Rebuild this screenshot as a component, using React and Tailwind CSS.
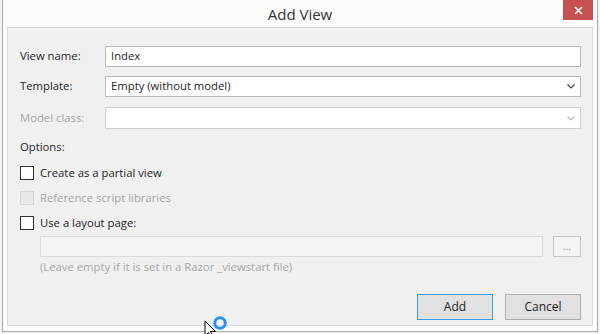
import React from "react";

const Chevron = ({ color }) => (
  <svg width="8" height="5" viewBox="0 0 8 5" className="shrink-0">
    <path d="M0.5 0.5 L4 4 L7.5 0.5" fill="none" stroke={color} strokeWidth="1.2" />
  </svg>
);

const Check = ({ disabled }) => (
  <div
    className={
      "w-[14px] h-[14px] border shrink-0 " +
      (disabled ? "border-[#d4d4d4] bg-[#e8e8e8]" : "border-[#333333] bg-white")
    }
  />
);

export default function App() {
  return (
    <div
      className="w-[600px] h-[334px] bg-[#f4f4f4] overflow-hidden relative text-[11.3px] text-[#1e1e1e]"
      style={{ fontFamily: "'Open Sans', 'Noto Sans', sans-serif" }}
    >
      <div className="ml-[2px] w-[596px] h-[332px] bg-[#fcfcfc] border-l border-r border-b border-[#a9a9a9] flex flex-col relative">
        <div className="h-[27px] flex items-center justify-center relative">
          <span className="text-[15px] text-[#333333] mt-[1px]">Add View</span>
          <div className="absolute right-[4px] top-0 w-[30px] h-[20px] bg-[#c75050] flex items-center justify-center">
            <svg width="9" height="9" viewBox="0 0 9 9">
              <path d="M1 1 L8 8 M8 1 L1 8" stroke="white" strokeWidth="1.6" />
            </svg>
          </div>
        </div>
        <div className="ml-[4px] mr-[4px] h-[299px] border border-[#dadada] bg-[#f0f0f0] pl-[12px] pr-[11px] pt-[18px] flex flex-col">
          <div className="flex items-center h-[21px]">
            <div className="w-[85px]">View name:</div>
            <div className="flex-1 h-[21px] bg-white border border-[#b9b9b9] flex items-center px-[5px]">Index</div>
          </div>
          <div className="flex items-center h-[21px] mt-[9px]">
            <div className="w-[85px]">Template:</div>
            <div className="flex-1 h-[21px] bg-white border border-[#b9b9b9] flex items-center pl-[5px] pr-[5px] justify-between">
              <span>Empty (without model)</span>
              <Chevron color="#444444" />
            </div>
          </div>
          <div className="flex items-center h-[22px] mt-[10px]">
            <div className="w-[85px] text-[#a6a6a6]">Model class:</div>
            <div className="flex-1 h-[22px] bg-white border border-[#d0d0d0] flex items-center justify-end pr-[5px]">
              <Chevron color="#b8b8b8" />
            </div>
          </div>
          <div className="mt-[10px] h-[16px] leading-[16px]">Options:</div>
          <div className="mt-[11px] flex items-center gap-[6px] h-[14px]">
            <Check />
            <span>Create as a partial view</span>
          </div>
          <div className="mt-[11px] flex items-center gap-[6px] h-[14px]">
            <Check disabled />
            <span className="text-[#a6a6a6]">Reference script libraries</span>
          </div>
          <div className="mt-[11px] flex items-center gap-[6px] h-[14px]">
            <Check />
            <span>Use a layout page:</span>
          </div>
          <div className="mt-[6px] ml-[20px] flex items-center h-[21px]">
            <div className="flex-1 h-[21px] bg-[#f4f4f4] border border-[#dadada]" />
            <div className="ml-[10px] w-[28px] h-[21px] bg-[#f4f4f4] border border-[#c6c6c6] flex items-end justify-center pb-[5px] text-[10px] leading-none text-[#999999]">...</div>
          </div>
          <div className="mt-[2px] ml-[20px] h-[16px] leading-[16px] text-[#a6a6a6]">
            (Leave empty if it is set in a Razor _viewstart file)
          </div>
          <div className="mt-[19px] flex justify-end gap-[12px]">
            <div className="w-[76px] h-[26px] bg-[#e1e1e1] border border-[#3c9dea] flex items-center justify-center text-[12px]">Add</div>
            <div className="w-[76px] h-[26px] bg-[#e1e1e1] border border-[#adadad] flex items-center justify-center text-[12px]">Cancel</div>
          </div>
        </div>
      </div>
      <svg className="absolute left-[204px] top-[320px]" width="14" height="20" viewBox="0 0 14 20">
        <path d="M1 1 L1 16 L4.5 12.5 L7 18 L9 17 L6.5 11.5 L11.5 11.5 Z" fill="white" stroke="black" strokeWidth="1" />
      </svg>
      <svg className="absolute left-[212px] top-[315px]" width="16" height="16" viewBox="0 0 16 16">
        <circle cx="8" cy="8" r="5.3" fill="none" stroke="#2a8ff0" strokeWidth="3" />
      </svg>
    </div>
  );
}
